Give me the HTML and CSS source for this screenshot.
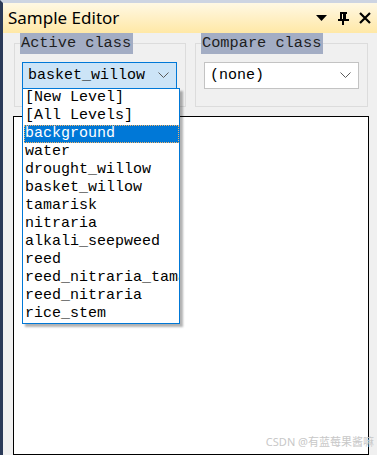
FILE: index.html
```html
<!DOCTYPE html>
<html lang="en">
<head>
    <meta charset="UTF-8">
    <title>Sample Editor</title>
    <link rel="stylesheet" href="styles.css">
</head>
<body>
    <div class="window">
        <div class="titlebar">
            <span class="title">Sample Editor</span>
            <div class="title-buttons">
                <svg width="12" height="7" viewBox="0 0 12 7"><path d="M0 0 H11 L5.5 6 Z" fill="#000"/></svg>
                <svg width="11" height="13" viewBox="0 0 11 13"><path d="M2 1 H9 M3 1 V8 M7 1 V8 M6 1 V8 M0 8 H11 M5 8 V13" stroke="#000" stroke-width="2" fill="none"/></svg>
                <svg width="12" height="12" viewBox="0 0 12 12"><path d="M1 1 L11 11 M11 1 L1 11" stroke="#000" stroke-width="2.2"/></svg>
            </div>
        </div>
        <div class="content">
            <div class="groups">
                <fieldset class="group">
                    <legend>Active class</legend>
                    <div class="combo-wrap">
                        <div class="combo active">
                            <span>basket_willow</span>
                            <svg class="chevron" width="11" height="6" viewBox="0 0 11 6"><path d="M0.5 0.5 L5.5 5.5 L10.5 0.5" stroke="#5a5a5a" fill="none"/></svg>
                        </div>
                        <ul class="dropdown">
                            <li>[New Level]</li>
                            <li>[All Levels]</li>
                            <li class="selected">background</li>
                            <li>water</li>
                            <li>drought_willow</li>
                            <li>basket_willow</li>
                            <li>tamarisk</li>
                            <li>nitraria</li>
                            <li>alkali_seepweed</li>
                            <li>reed</li>
                            <li>reed_nitraria_tamarisk</li>
                            <li>reed_nitraria</li>
                            <li>rice_stem</li>
                        </ul>
                    </div>
                </fieldset>
                <fieldset class="group">
                    <legend>Compare class</legend>
                    <div class="combo-wrap">
                        <div class="combo">
                            <span>(none)</span>
                            <svg class="chevron" width="11" height="6" viewBox="0 0 11 6"><path d="M0.5 0.5 L5.5 5.5 L10.5 0.5" stroke="#5a5a5a" fill="none"/></svg>
                        </div>
                    </div>
                </fieldset>
            </div>
            <div class="canvas">
                <span class="watermark">CSDN @有蓝莓果酱嘛</span>
            </div>
        </div>
    </div>
</body>
</html>
```

FILE: styles.css
```css
html, body {
    margin: 0;
    height: 100%;
    overflow: hidden;
}
body {
    background-color: #f0f0f0;
    font-family: "Liberation Mono", monospace;
}
.window {
    height: 100%;
    display: flex;
    flex-direction: column;
    border-left: 3px solid #2b3a58;
    border-top: 3px solid #cdd4e2;
    box-sizing: border-box;
}
.titlebar {
    height: 30px;
    flex: none;
    display: flex;
    align-items: center;
    justify-content: space-between;
    padding: 0 6px 0 5px;
    background: linear-gradient(#fff8e4, #ffe8a6);
}
.title {
    font-family: "Noto Sans", sans-serif;
    font-size: 17px;
    color: #000;
    margin-top: -1px;
}
.title-buttons {
    display: flex;
    align-items: center;
    gap: 10px;
}
.content {
    flex: 1;
    display: flex;
    flex-direction: column;
    padding: 0 8px 0 10px;
}
.groups {
    display: flex;
    gap: 9px;
    padding-left: 1px;
    height: 74px;
    flex: none;
}
.group {
    width: 172px;
    box-sizing: border-box;
    margin: 0;
    padding: 8px 0 0 7px;
    border: 1px solid #dcdcdc;
    min-width: 0;
}
.group + .group {
    width: 173px;
    padding-left: 8px;
}
legend {
    padding: 0 2px 0 1px;
    margin-left: -2px;
    height: 21px;
    line-height: 21px;
    font-size: 15.3px;
    color: #1e1e1e;
    background-color: #a3adc4;
}
.group + .group legend {
    margin-left: -3px;
}
.combo-wrap {
    position: relative;
    width: 155px;
}
.combo {
    height: 27px;
    box-sizing: border-box;
    border: 1px solid #c3c3c3;
    background-color: #fff;
    display: flex;
    align-items: center;
    justify-content: space-between;
    padding: 0 7px 0 5px;
    font-size: 15px;
    color: #000;
}
.combo.active {
    background-color: #cce4f7;
    border-color: #0078d7;
}
.chevron {
    margin-top: -2px;
}
.dropdown {
    position: absolute;
    top: 26px;
    left: 0;
    width: 156px;
    margin: 0;
    padding: 0;
    list-style: none;
    background-color: #fff;
    border: 1px solid #0078d7;
    box-shadow: 3px 3px 2px rgba(0,0,0,0.3);
    overflow: hidden;
    z-index: 2;
}
.dropdown li {
    height: 18px;
    line-height: 18px;
    font-size: 15px;
    padding-left: 2px;
    white-space: nowrap;
    color: #000;
}
.dropdown li.selected {
    background-color: #0078d7;
    color: #fff;
    margin-left: 1px;
    padding-left: 1px;
    outline: 1px dotted #f2b46a;
    outline-offset: -1px;
}
.canvas {
    flex: 1;
    margin-top: 9px;
    background-color: #fff;
    border: 1px solid #000;
    position: relative;
}
.watermark {
    position: absolute;
    right: -6px;
    bottom: 5px;
    font-family: "Noto Sans", "Noto Sans CJK SC", sans-serif;
    font-size: 11px;
    color: #c8c8c8;
}
```
